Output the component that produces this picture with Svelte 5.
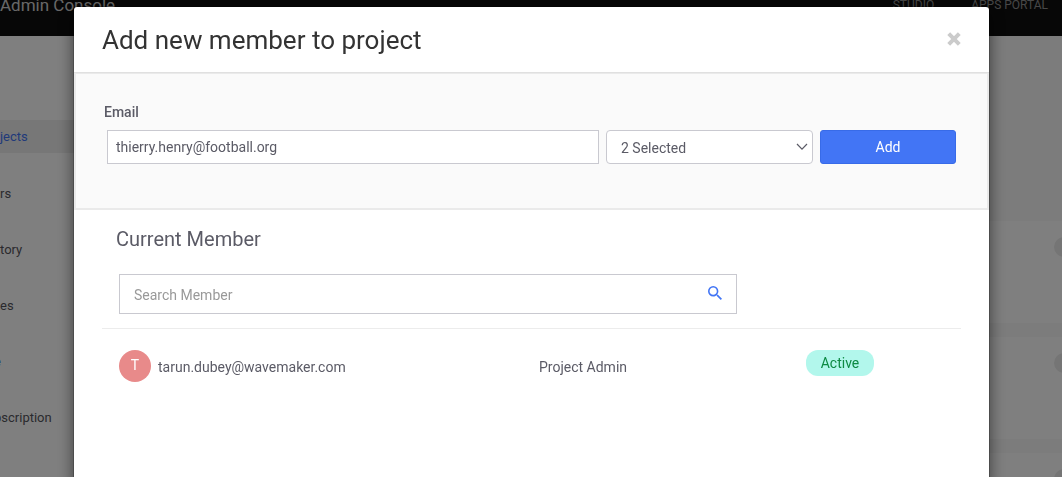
<script>
  const nav = [
    { label: 'jects', active: true },
    { label: 'rs' },
    { label: 'tory' },
    { label: 'es' },
    { label: 'e', cut: true, blue: true },
    { label: 'bscription', cut: true }
  ];
  const cards = [1, 2, 3];
  const members = [
    { email: 'tarun.dubey@wavemaker.com', initial: 'T', role: 'Project Admin', status: 'Active' }
  ];
  let email = $state('thierry.henry@football.org');
  let query = $state('');
</script>

<div class="app">
  <header class="topbar">
    <span class="brand">Admin Console</span>
    <nav class="toplinks">
      <a href="#studio">STUDIO</a>
      <a href="#portal">APPS PORTAL</a>
    </nav>
  </header>
  <div class="body">
    <nav class="sidebar">
      {#each nav as item}
        <a href="#nav" class:active={item.active} class:cut={item.cut} class:blue={item.blue}>{item.label}</a>
      {/each}
    </nav>
    <main class="content">
      {#each cards as card}
        <div class="card"><span class="dot"></span></div>
      {/each}
    </main>
  </div>
</div>

<div class="backdrop">
  <div class="modal" role="dialog" aria-labelledby="title">
    <div class="head">
      <h1 id="title">Add new member to project</h1>
      <button class="close" aria-label="Close">
        <svg width="14" height="14" viewBox="0 0 14 14"><path d="M1.700 1.700L12.300 12.300M12.300 1.700L1.700 12.300" stroke="#cbcbcb" stroke-width="4" /></svg>
      </button>
    </div>

    <form class="invite" onsubmit={(e) => e.preventDefault()}>
      <label for="email">Email</label>
      <div class="fields">
        <input id="email" type="text" bind:value={email} />
        <div class="pick">
          <select aria-label="Roles">
            <option>2 Selected</option>
          </select>
          <svg width="12" height="8" viewBox="0 0 12 8"><path d="M1 1L6 6.2L11 1" fill="none" stroke="#5b5b66" stroke-width="1.2" /></svg>
        </div>
        <button class="add" type="submit">Add</button>
      </div>
    </form>

    <section class="members">
      <h2>Current Member</h2>
      <div class="search">
        <input type="text" placeholder="Search Member" aria-label="Search Member" bind:value={query} />
        <svg width="14" height="14" viewBox="3 3 17.5 17.5"><path fill="#4275f5" d="M15.5 14h-.79l-.28-.27A6.47 6.47 0 0 0 16 9.500 6.500 6.500 0 1 0 9.500 16c1.610 0 3.090-.59 4.230-1.570l.27.28v.79l5 4.990L20.490 19l-4.990-5zm-6 0C7.010 14 5 11.990 5 9.500S7.010 5 9.500 5 14 7.010 14 9.500 11.990 14 9.500 14z" /></svg>
      </div>
      <ul>
        {#each members as m}
          <li>
            <span class="who"><span class="avatar">{m.initial}</span>{m.email}</span>
            <span class="role">{m.role}</span>
            <span class="state"><span class="badge">{m.status}</span></span>
          </li>
        {/each}
      </ul>
    </section>
  </div>
</div>

<style>
  :global(body) {
    margin: 0;
    overflow: hidden;
    font-family: Roboto, 'Liberation Sans', sans-serif;
    font-size: 14px;
    color: #5b5b66;
  }
  * { box-sizing: border-box; }
  a { text-decoration: none; color: inherit; }
  input, select, button { font-family: inherit; font-size: 14px; color: inherit; }

  .app { height: 100vh; overflow: hidden; display: flex; flex-direction: column; background: #f8f8f8; }
  .topbar {
    flex: none;
    height: 36px;
    display: flex;
    justify-content: space-between;
    background: #0e0e0e;
    color: #d0d0d0;
    padding-right: 14px;
  }
  .brand { font-size: 17px; line-height: 18px; margin-top: -4px; }
  .toplinks { display: flex; gap: 37px; font-size: 12px; line-height: 18px; margin-top: -4px; color: #8e8e8e; }
  .body { flex: 1; display: flex; }
  .sidebar {
    width: 240px;
    padding-top: 84px;
    display: flex;
    flex-direction: column;
    gap: 23px;
    background: #fff;
    overflow: hidden;
  }
  .sidebar a { flex: none; font-size: 13px; line-height: 33px; color: #55555c; }
  .sidebar a.active { background: #eee; color: #4275f5; margin-bottom: 1px; }
  .sidebar a.blue { color: #4275f5; }
  .sidebar a.cut { text-indent: -6px; }
  .content { flex: 1; padding-top: 185px; display: flex; flex-direction: column; gap: 14px; overflow: hidden; }
  .card { flex: none; height: 102px; padding-top: 16px; background: #fff; display: flex; justify-content: flex-end; }
  .dot { width: 20px; height: 20px; border-radius: 50%; background: #ebebeb; margin-right: -12px; }

  .backdrop { position: fixed; inset: 0; overflow: hidden; background: rgba(0, 0, 0, 0.5); padding: 6px 72px 0 73px; }
  .modal {
    min-height: 100vh;
    background: #fff;
    background-clip: padding-box;
    border: 1px solid rgba(0, 0, 0, 0.2);
    border-radius: 4px;
    box-shadow: 0 5px 15px rgba(0, 0, 0, 0.5);
  }
  .head {
    height: 66px;
    display: flex;
    align-items: center;
    justify-content: space-between;
    padding: 0 28px;
    border-bottom: 1px solid #e0e0e0;
  }
  h1 { margin: 0; font-size: 26px; font-weight: 400; color: #333; }
  .close { border: 0; padding: 0 0 2px; background: none; display: flex; }

  .invite {
    background: #fafafa;
    border: 2px solid #eaeaea;
    border-top-width: 1px;
    padding: 28px 31px 44px;
  }
  .invite label { display: block; font-weight: 500; line-height: 20px; margin: 0 0 8px -3px; }
  .fields { display: flex; gap: 7px; }
  .fields input { flex: 1; min-width: 0; height: 34px; padding: 0 8px; border: 1px solid #c9c9d0; background: #fff; }
  .pick { width: 207px; position: relative; }
  .pick select {
    appearance: none;
    width: 100%;
    height: 34px;
    padding: 2px 14px 0;
    border: 1px solid #c9c9d0;
    border-radius: 4px;
    background: #fff;
  }
  .pick svg { position: absolute; right: 5px; top: 13px; pointer-events: none; }
  .add { width: 136px; height: 34px; border: 1px solid #386be8; border-radius: 3px; background: #4275f5; color: #fff; }

  .members { padding: 17px 28px 0; }
  h2 { margin: 0 0 23px 14px; font-size: 20px; line-height: 24px; font-weight: 400; }
  .search { width: 618px; margin: 0 0 14px 17px; position: relative; }
  .search input { display: block; width: 100%; height: 40px; padding: 2px 48px 0 14px; border: 1px solid #c9c9d0; background: #fff; }
  .search input::placeholder { color: #999; opacity: 1; }
  .search svg { position: absolute; right: 15px; top: 12px; }
  ul { list-style: none; margin: 0; padding: 0; border-top: 1px solid #ececec; }
  li { display: grid; grid-template-columns: 420px 267px 1fr; padding: 21px 0 21px 17px; line-height: 34px; }
  .who { display: flex; gap: 7px; }
  .avatar { width: 32px; height: 32px; border-radius: 50%; background: #e88a8a; color: #fff; line-height: 30px; text-align: center; }
  .badge { display: block; width: 68px; line-height: 26px; border-radius: 12px; background: #b2f7ec; color: #0d8a43; text-align: center; }
</style>
